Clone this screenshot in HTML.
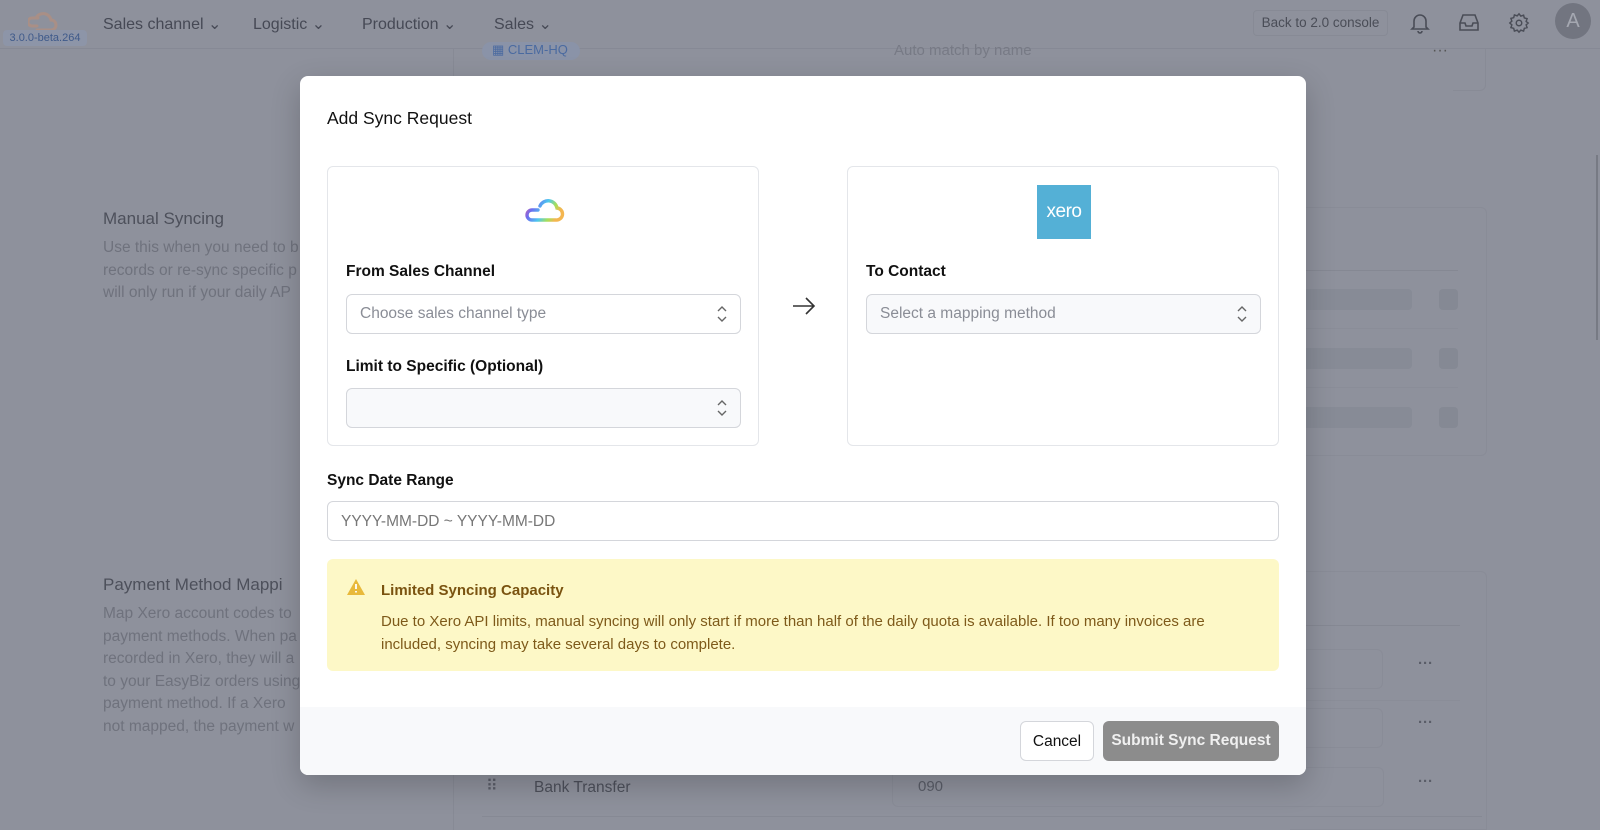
<!DOCTYPE html>
<html><head><meta charset="utf-8"><style>
*{box-sizing:border-box;margin:0;padding:0}
body{width:1600px;height:830px;overflow:hidden;background:#8e919c;font-family:"Liberation Sans",sans-serif;position:relative;color:#111}
.a{position:absolute}
.nav{left:0;top:0;width:1600px;height:49px;border-bottom:1px solid #868995}
.navt{font-size:16px;color:#464955;top:14px}
.bg{color:#4d505b}
.bgl{color:#6f727d;font-size:15.5px;line-height:22.5px}
.modal{left:300px;top:76px;width:1006px;height:699px;background:#fff;border-radius:8px;overflow:hidden;box-shadow:0 10px 30px rgba(0,0,0,.2)}
.card{border:1px solid #e4e6ea;border-radius:6px;background:#fff}
.lbl{font-size:15.5px;font-weight:bold;color:#111}
.sel{border:1px solid #d4d6db;border-radius:6px;height:40px;font-size:15.5px;color:#8a8d96;padding:10px 13px;background:#fff}
.chev{position:absolute;right:12px;top:10px}
.bar{width:122px;height:21px;background:#878b96;border-radius:4px;left:1290px}
.sq{width:19px;height:21px;background:#858994;border-radius:4px;left:1439px}
.dots{left:1418px;color:#5a5d68;font-size:15px;font-weight:bold}
.inp{left:1290px;width:93px;height:40px;border:1px solid #898c97;border-left:none;border-radius:0 6px 6px 0}
</style></head><body>
<div class="a nav">
 <svg class="a" style="left:28px;top:9px" width="32" height="22" viewBox="0 0 32 22"><path d="M9 17 H4 a4 4 0 0 1 0-8 H10 M8 9 a8 8 0 0 1 15 2 a5 5 0 0 1 0 10 H9" fill="none" stroke="#a98f86" stroke-width="3" stroke-linecap="round"/></svg>
 <div class="a" style="left:3px;top:30px;width:84px;height:16px;background:#8d95a8;border-radius:4px;font-size:11px;color:#3f5a8a;text-align:center;line-height:16px">3.0.0-beta.264</div>
 <div class="a navt" style="left:103px">Sales channel ⌄</div>
 <div class="a navt" style="left:253px">Logistic ⌄</div>
 <div class="a navt" style="left:362px">Production ⌄</div>
 <div class="a navt" style="left:494px">Sales ⌄</div>
 <div class="a" style="left:1253px;top:10px;width:135px;height:26px;border:1px solid #878a95;border-radius:4px;font-size:13.5px;color:#4a4d57;text-align:center;line-height:24px">Back to 2.0 console</div>
 <svg class="a" style="left:1410px;top:12px" width="20" height="22" viewBox="0 0 20 22" fill="none" stroke="#4a4d57" stroke-width="1.6"><path d="M4 15V9a6 6 0 0 1 12 0v6l2 2H2z M8 19a2 2 0 0 0 4 0"/></svg>
 <svg class="a" style="left:1458px;top:13px" width="22" height="20" viewBox="0 0 22 20" fill="none" stroke="#4a4d57" stroke-width="1.6"><path d="M2 10l3-8h12l3 8v7H2z M2 10h5l1 3h6l1-3h5"/></svg>
 <svg class="a" style="left:1508px;top:12px" width="22" height="22" viewBox="0 0 24 24" fill="none" stroke="#4a4d57" stroke-width="1.6"><circle cx="12" cy="12" r="3"/><path d="M12 2l2 2.5 3-1 .8 3 3 .8-1 3L22 12l-2.2 2 1 3-3 .8-.8 3-3-1L12 22l-2-2.2-3 1-.8-3-3-.8 1-3L2 12l2.2-2-1-3 3-.8.8-3 3 1z"/></svg>
 <div class="a" style="left:1555px;top:3px;width:36px;height:36px;border-radius:50%;background:#727580;color:#a5a8b1;font-size:20px;text-align:center;line-height:36px">A</div>
</div>
<div class="a" style="left:453px;top:49px;width:1px;height:781px;background:#878a95"></div>
<div class="a" style="left:482px;top:42px;width:98px;height:18px;background:#8a93a8;border-radius:9px;font-size:13px;color:#4a6aa0;padding-left:10px">▦ CLEM-HQ</div>
<div class="a" style="left:894px;top:42px;font-size:15px;color:#777a85">Auto match by name</div>
<div class="a" style="left:1432px;top:42px;color:#555;font-size:16px">···</div>
<div class="a" style="left:1453px;top:49px;width:33px;height:42px;border:1px solid #888b96;border-top:none;border-left:none;border-radius:0 0 6px 0"></div>
<div class="a bg" style="left:103px;top:209px;font-size:17px">Manual Syncing</div>
<div class="a bgl" style="left:103px;top:237px">Use this when you need to b<br>records or re-sync specific p<br>will only run if your daily AP</div>
<div class="a bg" style="left:103px;top:575px;font-size:17px">Payment Method Mappi</div>
<div class="a bgl" style="left:103px;top:603px">Map Xero account codes to<br>payment methods. When pa<br>recorded in Xero, they will a<br>to your EasyBiz orders using<br>payment method. If a Xero<br>not mapped, the payment w</div>
<div class="a" style="left:1290px;top:207px;width:197px;height:249px;border:1px solid #898c97;border-left:none;border-radius:0 6px 6px 0"></div>
<div class="a" style="left:1290px;top:270px;width:168px;height:1px;background:#858893"></div>
<div class="a bar" style="top:289px"></div><div class="a sq" style="top:289px"></div>
<div class="a" style="left:1290px;top:328px;width:168px;height:1px;background:#8a8d98"></div>
<div class="a bar" style="top:348px"></div><div class="a sq" style="top:348px"></div>
<div class="a" style="left:1290px;top:387px;width:168px;height:1px;background:#8a8d98"></div>
<div class="a bar" style="top:407px"></div><div class="a sq" style="top:407px"></div>
<div class="a" style="left:1290px;top:571px;width:197px;height:259px;border:1px solid #898c97;border-left:none;border-radius:0 6px 0 0"></div>
<div class="a" style="left:1290px;top:625px;width:170px;height:1px;background:#858893"></div>
<div class="a inp" style="top:649px"></div><div class="a dots" style="top:655px">···</div>
<div class="a" style="left:1290px;top:700px;width:170px;height:1px;background:#8a8d98"></div>
<div class="a inp" style="top:708px"></div><div class="a dots" style="top:714px">···</div>
<div class="a dots" style="top:773px">···</div>
<div class="a" style="left:486px;top:776px;color:#5a5d68;font-size:16px">⠿</div>
<div class="a" style="left:534px;top:779px;color:#4d505b;font-size:15.5px">Bank Transfer</div>
<div class="a" style="left:892px;top:767px;width:492px;height:40px;border:1px solid #898c97;border-radius:6px;font-size:15px;color:#5a5d68;padding:10px 25px">090</div>
<div class="a" style="left:482px;top:816px;width:1000px;height:1px;background:#868994"></div>
<div class="a" style="left:1596px;top:155px;width:2px;height:185px;background:#777a84"></div>

<div class="a modal">
 <div class="a" style="left:27px;top:32px;font-size:17.5px;color:#111">Add Sync Request</div>
 <div class="a card" style="left:27px;top:90px;width:432px;height:280px">
  <svg class="a" style="left:195px;top:30px" width="42" height="30" viewBox="0 0 42 30"><defs><linearGradient id="g" x1="0" y1="0" x2="1" y2="0.3"><stop offset="0" stop-color="#e4589a"/><stop offset=".25" stop-color="#6b6ef0"/><stop offset=".55" stop-color="#4cc7f0"/><stop offset=".8" stop-color="#a5e05a"/><stop offset="1" stop-color="#f4b650"/></linearGradient></defs><path d="M15 13 H9 a5 5 0 0 0 0 10 H33 a6 6 0 0 0 1-12 a9 9 0 0 0-17-2" fill="none" stroke="url(#g)" stroke-width="3.4" stroke-linecap="round"/></svg>
  <div class="a lbl" style="left:18px;top:96px">From Sales Channel</div>
  <div class="a sel" style="left:18px;top:127px;width:395px">Choose sales channel type<svg class="chev" width="12" height="18" viewBox="0 0 12 18" fill="none" stroke="#666" stroke-width="1.4"><path d="M2 6l4-4 4 4M2 12l4 4 4-4"/></svg></div>
  <div class="a lbl" style="left:18px;top:191px">Limit to Specific (Optional)</div>
  <div class="a sel" style="left:18px;top:221px;width:395px;background:#f8f9fb">&nbsp;<svg class="chev" width="12" height="18" viewBox="0 0 12 18" fill="none" stroke="#666" stroke-width="1.4"><path d="M2 6l4-4 4 4M2 12l4 4 4-4"/></svg></div>
 </div>
 <svg class="a" style="left:492px;top:221px" width="24" height="18" viewBox="0 0 24 18" fill="none" stroke="#333" stroke-width="1.6"><path d="M1 9h21M14 1l8 8-8 8"/></svg>
 <div class="a card" style="left:547px;top:90px;width:432px;height:280px">
  <div class="a" style="left:189px;top:18px;width:54px;height:54px;background:#54b0d6;color:#fff;font-size:19px;text-align:center;line-height:54px;letter-spacing:-0.5px">xero</div>
  <div class="a lbl" style="left:18px;top:96px">To Contact</div>
  <div class="a sel" style="left:18px;top:127px;width:395px;background:#f8f9fb">Select a mapping method<svg class="chev" width="12" height="18" viewBox="0 0 12 18" fill="none" stroke="#666" stroke-width="1.4"><path d="M2 6l4-4 4 4M2 12l4 4 4-4"/></svg></div>
 </div>
 <div class="a lbl" style="left:27px;top:396px">Sync Date Range</div>
 <div class="a sel" style="left:27px;top:425px;width:952px;color:#777;padding-top:11px">YYYY-MM-DD ~ YYYY-MM-DD</div>
 <div class="a" style="left:27px;top:483px;width:952px;height:112px;background:#fdf8c7;border-radius:6px">
  <svg class="a" style="left:20px;top:20px" width="18" height="16" viewBox="0 0 18 16"><path d="M9 0L18 16H0z" fill="#e8b93b"/><path d="M9 5v5M9 12v1.5" stroke="#fff" stroke-width="1.8"/></svg>
  <div class="a" style="left:54px;top:23px;font-size:15px;font-weight:bold;color:#7a5310">Limited Syncing Capacity</div>
  <div class="a" style="left:54px;top:52px;width:880px;font-size:15px;line-height:22.5px;color:#7e5a1a">Due to Xero API limits, manual syncing will only start if more than half of the daily quota is available. If too many invoices are included, syncing may take several days to complete.</div>
 </div>
 <div class="a" style="left:0;top:631px;width:1006px;height:68px;background:#f8f9fb"></div>
 <div class="a" style="left:720px;top:645px;width:74px;height:40px;border:1px solid #d4d6db;border-radius:6px;background:#fff;font-size:15.5px;text-align:center;line-height:40px;color:#111">Cancel</div>
 <div class="a" style="left:803px;top:645px;width:176px;height:40px;border-radius:6px;background:#8c8c8c;font-size:15.5px;font-weight:bold;text-align:center;line-height:40px;color:#f0f0f0">Submit Sync Request</div>
</div>
</body></html>
